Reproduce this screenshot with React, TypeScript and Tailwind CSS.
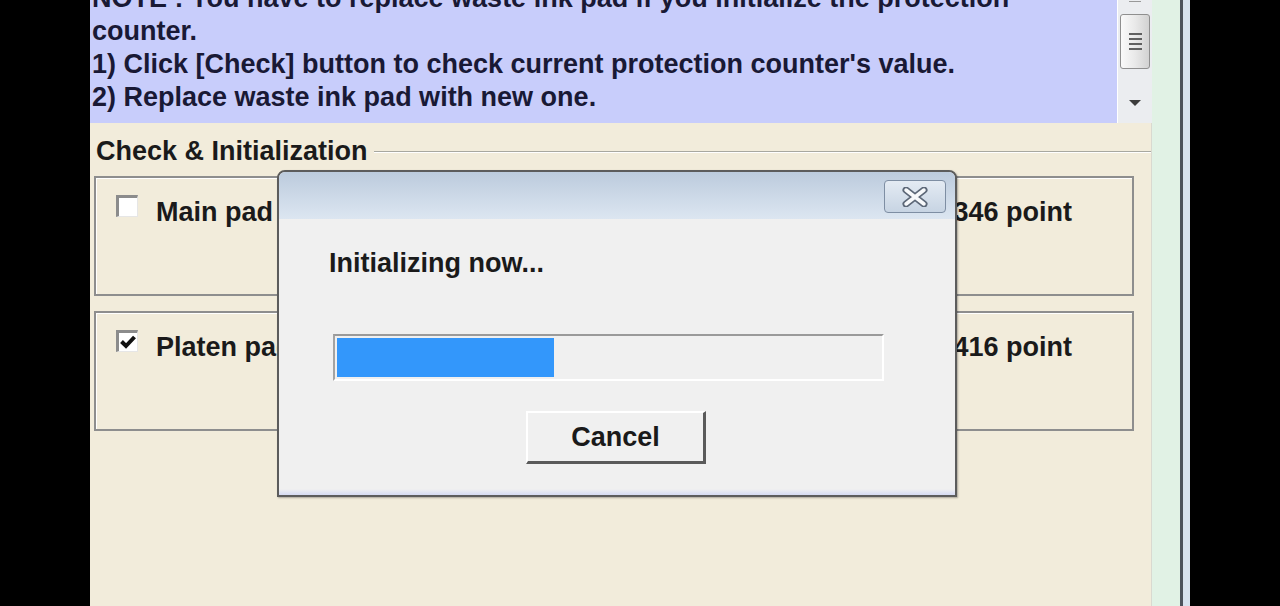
import React from 'react'

const font = { fontFamily: '"Liberation Sans", Arial, sans-serif' }

function CheckBox({ checked }: { checked?: boolean }) {
  return (
    <div className="w-[22px] h-[22px] shrink-0 border-t-[3px] border-l-[3px] border-b border-r border-t-[#8c8c8c] border-l-[#8c8c8c] border-b-[#e6e6e6] border-r-[#e6e6e6] bg-white flex items-center justify-center">
      {checked && (
        <svg width="16" height="14" viewBox="0 0 16 14">
          <path d="M1.5 6.5 L6 11 L14.5 2" fill="none" stroke="#111" strokeWidth="4" />
        </svg>
      )}
    </div>
  )
}

function PadBox({ label, value, checked }: { label: string; value: string; checked?: boolean }) {
  return (
    <div className="ml-[4px] w-[1040px] h-[120px] border-2 border-[#8e8e8e] shadow-[inset_1px_1px_0_#ffffff] flex items-start pl-[20px] pr-[60px] pt-[17px]">
      <CheckBox checked={checked} />
      <span className="ml-[18px] mt-[1px] text-[27px] leading-[32px] font-bold text-[#1a1a1a]">{label}</span>
      <span className="ml-auto mt-[1px] text-[27px] leading-[32px] font-bold text-[#1a1a1a]">{value}</span>
    </div>
  )
}

function Scrollbar() {
  return (
    <div className="w-[35px] h-full bg-[#ebedf0] border-l border-white relative flex flex-col items-center">
      <div className="w-[12px] h-[3px] mt-[-1px] border-b border-[#999]" />
      <div className="mt-[12px] w-[30px] h-[55px] rounded-[3px] border border-[#8f8f8f] bg-gradient-to-r from-[#fafafa] via-[#e9e9e9] to-[#d2d2d2] flex flex-col items-center justify-center gap-[3px]">
        <div className="w-[13px] h-[2px] bg-[#606060]" />
        <div className="w-[13px] h-[2px] bg-[#606060]" />
        <div className="w-[13px] h-[2px] bg-[#606060]" />
        <div className="w-[13px] h-[2px] bg-[#606060]" />
      </div>
      <svg className="mt-[30px]" width="14" height="8" viewBox="0 0 14 8">
        <path d="M1 1 H13 L7 7 Z" fill="#3c3c3c" />
      </svg>
    </div>
  )
}

function CloseIcon() {
  return (
    <svg width="28" height="20" viewBox="0 0 28 20">
      <path d="M5 3 L23 17 M23 3 L5 17" stroke="#5d6878" strokeWidth="7" strokeLinecap="round" />
      <path d="M5 3 L23 17 M23 3 L5 17" stroke="#f7f9fb" strokeWidth="3.5" strokeLinecap="round" />
    </svg>
  )
}

function ProgressDialog() {
  return (
    <div className="absolute left-[187px] top-[170px] w-[680px] h-[327px] border-2 border-[#5c5c5c] rounded-t-[8px] bg-[#f0f0f0] overflow-hidden flex flex-col shadow-[1px_1px_2px_rgba(0,0,0,0.3)]">
      <div className="h-[47px] shrink-0 bg-gradient-to-b from-[#bccbdd] to-[#dce6f1] flex justify-end items-start pt-[8px] pr-[9px]">
        <div className="w-[62px] h-[33px] rounded-[4px] border border-[#7e8ea3] bg-gradient-to-b from-[#e4ebf3] to-[#c7d4e3] flex items-center justify-center">
          <CloseIcon />
        </div>
      </div>
      <div className="flex-1 flex flex-col pl-[50px] relative">
        <div className="mt-[28px] text-[27px] leading-[32px] font-bold text-[#1a1a1a]">Initializing now...</div>
        <div className="mt-[55px] ml-[4px] w-[551px] h-[47px] border-t-2 border-l-2 border-t-[#9a9a9a] border-l-[#a3a3a3] border-b-2 border-r-2 border-b-white border-r-white p-[2px]">
          <div className="w-[217px] h-full bg-[#3397fb]" />
        </div>
        <div className="mt-[30px] ml-[197px] w-[180px] h-[53px] border-t-2 border-l-2 border-t-white border-l-white border-b-[3px] border-r-[3px] border-b-[#5a5a5a] border-r-[#5a5a5a] bg-[#f0f0f0] flex items-center justify-center">
          <span className="text-[27px] leading-[32px] font-bold text-[#1a1a1a]">Cancel</span>
        </div>
        <div className="absolute left-0 right-0 bottom-0 h-[6px] bg-gradient-to-b from-[#f0f0f0] to-[#d5daf2]" />
      </div>
    </div>
  )
}

export default function App() {
  return (
    <div className="w-[1280px] h-[606px] bg-black flex overflow-hidden" style={font}>
      <div className="w-[90px] shrink-0" />
      <div className="w-[1062px] shrink-0 h-full bg-[#f2ecdb] flex flex-col relative">
        {/* note box */}
        <div className="h-[123px] shrink-0 flex">
          <div className="flex-1 bg-[#c8cdfb] overflow-hidden pl-[2px]">
            <div className="-mt-[18px] text-[27px] leading-[33px] font-bold text-[#191935]">
              <div>NOTE : You have to replace waste ink pad if you initialize the protection</div>
              <div>counter.</div>
              <div>1) Click [Check] button to check current protection counter's value.</div>
              <div>2) Replace waste ink pad with new one.</div>
            </div>
          </div>
          <Scrollbar />
        </div>

        {/* group box */}
        <div className="flex-1 border-r border-[#d9d9d0] flex flex-col">
          <div className="mt-[13px] flex items-center">
            <span className="ml-[6px] text-[27px] leading-[30px] font-bold text-[#1a1a1a]">Check &amp; Initialization</span>
            <div className="flex-1 ml-[6px] mt-[2px] h-[2px] border-t border-[#a8a8a0] border-b border-b-white" />
          </div>
          <div className="mt-[10px]">
            <PadBox label="Main pad counter" value="12346 point" />
          </div>
          <div className="mt-[15px]">
            <PadBox label="Platen pad counter" value="2416 point" checked />
          </div>
        </div>

        <ProgressDialog />
      </div>
      <div className="w-[28px] shrink-0 bg-[#e1f2e5]" />
      <div className="w-[3px] shrink-0 bg-[#4d525c]" />
      <div className="w-[7px] shrink-0 bg-[#d8e2ee]" />
    </div>
  )
}
